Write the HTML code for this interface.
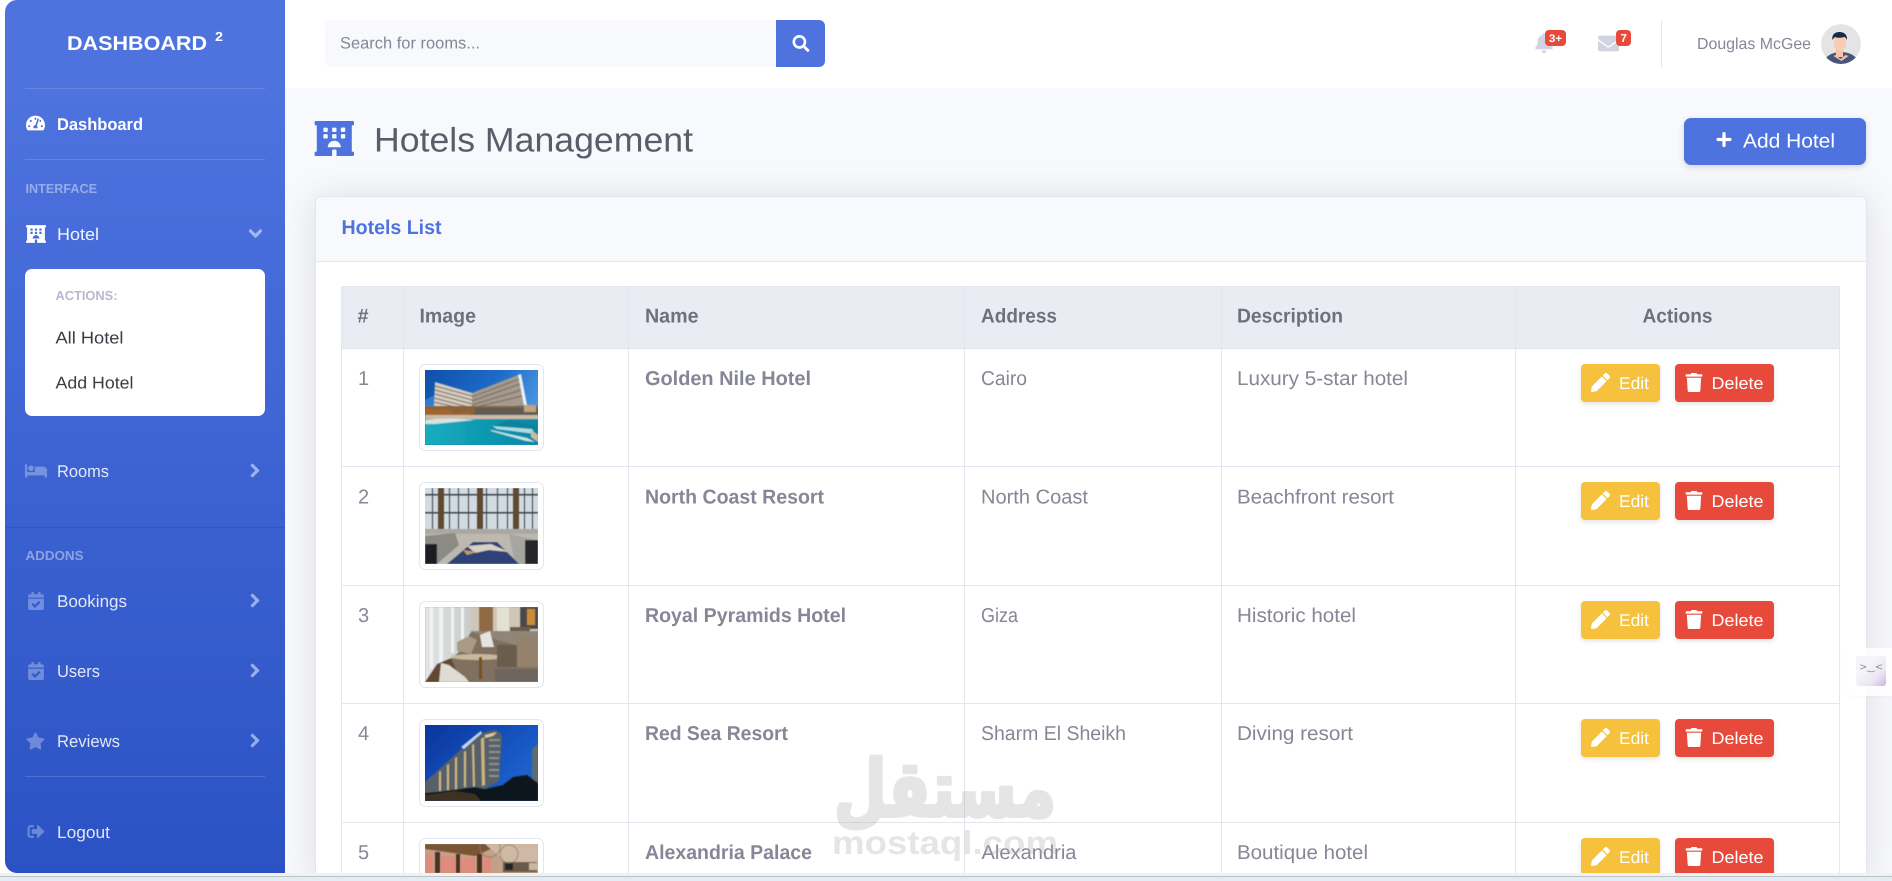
<!DOCTYPE html>
<html lang="en">
<head>
<meta charset="utf-8">
<title>Hotels Management</title>
<style>
html,body{margin:0;padding:0;width:1892px;height:881px;overflow:hidden;background:#fff;font-family:"Liberation Sans",sans-serif}
.abs{position:absolute}
#main{left:285px;top:88px;width:1607px;height:785px;background:#f8f9fc;overflow:hidden}
#card{left:30px;top:108px;width:1550px;height:682px;box-sizing:content-box;background:#fff;border:1px solid #e3e6f0;border-radius:6px;box-shadow:0 3px 35px rgba(58,59,69,.15)}
#main{contain:paint}
#card{height:680px}
#cardhead{left:0;top:0;width:1550px;height:64px;background:#f8f9fc;border-bottom:1px solid #e3e6f0;border-radius:6px 6px 0 0}
#side{left:5px;top:0;width:280px;height:873px;border-radius:12px 0 0 12px;background:linear-gradient(180deg,#4e73df 10%,#2b52c4 100%)}
#sub{left:25px;top:269px;width:240px;height:147px;background:#fff;border-radius:7px}
#addbtn{left:1684px;top:118px;width:182px;height:47px;background:#4e73df;border-radius:7px;box-shadow:0 2px 6px rgba(58,59,69,.2)}
.b{position:absolute;height:38px;border-radius:4px;box-shadow:0 2px 5px rgba(58,59,69,.15)}
.e{left:1581px;width:79px;background:#f6c23e}
.d{left:1675px;width:99px;background:#e74a3b}
#foot{left:0;top:873px;width:1892px;height:8px;background:#e1ecf4;overflow:hidden}
#foot div{height:3px;background:#f1f1f2;border-bottom:1px solid #bfc2c5}
#float{left:1846px;top:648px;width:46px;height:48px;background:rgba(255,255,255,.85);border-radius:8px 0 0 8px;box-shadow:0 1px 3px rgba(0,0,0,.03)}
#floati{left:1856px;top:656px;width:30px;height:30px;border-radius:3px;background:linear-gradient(135deg,#f4f4fa 35%,#ece6f5 70%,#d4b0e6 100%)}
svg#o{position:absolute;left:0;top:0;text-rendering:geometricPrecision}
</style>
</head>
<body>
<div class="abs" id="main">
  <div class="abs" id="card"><div class="abs" id="cardhead"></div></div>
</div>
<div class="abs" id="side"></div>
<div class="abs" id="sub"></div>
<div class="abs" id="addbtn"></div>
<div class="b e" style="top:364px"></div><div class="b d" style="top:364px"></div>
<div class="b e" style="top:482px"></div><div class="b d" style="top:482px"></div>
<div class="b e" style="top:601px"></div><div class="b d" style="top:601px"></div>
<div class="b e" style="top:719px"></div><div class="b d" style="top:719px"></div>
<div class="b e" style="top:838px"></div><div class="b d" style="top:838px"></div>

<svg id="o" width="1892" height="881" viewBox="0 0 1892 881" xmlns="http://www.w3.org/2000/svg" font-family="'Liberation Sans',sans-serif">
<defs>
<symbol id="search" viewBox="0 0 512 512"><path d="M505 442.7L405.3 343c-4.5-4.5-10.6-7-17-7H372c27.6-35.3 44-79.7 44-128C416 93.1 322.9 0 208 0S0 93.1 0 208s93.1 208 208 208c48.3 0 92.7-16.4 128-44v16.3c0 6.4 2.5 12.5 7 17l99.7 99.7c9.4 9.4 24.6 9.4 33.9 0l28.3-28.3c9.4-9.4 9.4-24.6.1-34zM208 336c-70.7 0-128-57.2-128-128 0-70.7 57.2-128 128-128 70.7 0 128 57.2 128 128 0 70.7-57.2 128-128 128z"/></symbol>
<symbol id="plus" viewBox="0 0 448 512"><path d="M416 208H272V64c0-17.67-14.33-32-32-32h-32c-17.67 0-32 14.33-32 32v144H32c-17.67 0-32 14.33-32 32v32c0 17.67 14.33 32 32 32h144v144c0 17.67 14.33 32 32 32h32c17.67 0 32-14.33 32-32V304h144c17.67 0 32-14.33 32-32v-32c0-17.67-14.33-32-32-32z"/></symbol>
<symbol id="pencil" viewBox="0 0 512 512"><path d="M497.9 142.1l-46.1 46.1c-4.7 4.7-12.3 4.7-17 0l-111-111c-4.7-4.7-4.7-12.3 0-17l46.1-46.1c18.7-18.7 49.1-18.7 67.9 0l60.1 60.1c18.8 18.7 18.8 49.1 0 67.9zM284.2 99.8L21.6 362.4.4 483.9c-2.9 16.4 11.4 30.6 27.8 27.8l121.5-21.3 262.6-262.6c4.7-4.7 4.7-12.3 0-17l-111-111c-4.8-4.7-12.4-4.7-17.1 0z"/></symbol>
<symbol id="trash" viewBox="0 0 448 512"><path d="M432 32H312l-9.4-18.7A24 24 0 0 0 281.1 0H166.8a23.72 23.72 0 0 0-21.4 13.3L136 32H16A16 16 0 0 0 0 48v32a16 16 0 0 0 16 16h416a16 16 0 0 0 16-16V48a16 16 0 0 0-16-16zM53.2 467a48 48 0 0 0 47.9 45h245.8a48 48 0 0 0 47.9-45L416 128H32z"/></symbol>
<symbol id="cr" viewBox="0 0 320 512"><path d="M285.476 272.971L91.132 467.314c-9.373 9.373-24.569 9.373-33.941 0l-22.667-22.667c-9.357-9.357-9.375-24.522-.04-33.901L188.505 256 34.484 101.255c-9.335-9.379-9.317-24.544.04-33.901l22.667-22.667c9.373-9.373 24.569-9.373 33.941 0L285.475 239.03c9.373 9.372 9.373 24.568.001 33.941z"/></symbol>
<symbol id="cd" viewBox="0 0 448 512"><path d="M207.029 381.476L12.686 187.132c-9.373-9.373-9.373-24.569 0-33.941l22.667-22.667c9.357-9.357 24.522-9.375 33.901-.04L224 284.505l154.745-154.021c9.379-9.335 24.544-9.317 33.901.04l22.667 22.667c9.373 9.373 9.373 24.569 0 33.941L240.971 381.476c-9.373 9.372-24.569 9.372-33.942 0z"/></symbol>
<symbol id="star" viewBox="0 0 576 512"><path d="M259.3 17.8L194 150.2 47.9 171.5c-26.2 3.8-36.7 36.1-17.7 54.6l105.7 103-25 145.5c-4.5 26.3 23.2 46 46.4 33.7L288 439.6l130.7 68.7c23.2 12.2 50.9-7.4 46.4-33.7l-25-145.5 105.7-103c19-18.5 8.5-50.8-17.7-54.6L382 150.2 316.7 17.8c-11.7-23.6-45.6-23.9-57.4 0z"/></symbol>
<symbol id="bell" viewBox="0 0 448 512"><path d="M224 512c35.32 0 63.97-28.65 63.97-64H160.03c0 35.35 28.65 64 63.97 64zm215.39-149.71c-19.32-20.76-55.47-51.99-55.47-154.29 0-77.7-54.48-139.9-127.94-155.16V32c0-17.67-14.32-32-31.98-32s-31.98 14.33-31.98 32v20.84C118.56 68.1 64.08 130.3 64.08 208c0 102.3-36.15 133.53-55.47 154.29-6 6.45-8.66 14.16-8.61 21.71.11 16.4 12.98 32 32.1 32h383.8c19.12 0 32-15.6 32.1-32 .05-7.55-2.61-15.27-8.61-21.71z"/></symbol>
<symbol id="env" viewBox="0 0 512 512"><path d="M502.3 190.8c3.9-3.1 9.7-.2 9.7 4.7V400c0 26.5-21.5 48-48 48H48c-26.5 0-48-21.5-48-48V195.6c0-5 5.7-7.8 9.7-4.7 22.4 17.4 52.1 39.5 154.1 113.6 21.1 15.4 56.7 47.8 92.2 47.6 35.7.3 72-32.8 92.3-47.6 102-74.1 131.6-96.3 154-113.7zM256 320c23.2.4 56.6-29.2 73.4-41.4 132.7-96.3 142.8-104.7 173.4-128.7 5.8-4.5 9.2-11.5 9.2-18.9v-19c0-26.5-21.5-48-48-48H48C21.5 64 0 85.5 0 112v19c0 7.4 3.4 14.3 9.2 18.9 30.6 23.9 40.7 32.4 173.4 128.7 16.8 12.2 50.2 41.8 73.4 41.4z"/></symbol>
<symbol id="hotel" viewBox="0 0 576 512"><path d="M560 64c8.84 0 16-7.16 16-16V16c0-8.84-7.16-16-16-16H16C7.16 0 0 7.16 0 16v32c0 8.84 7.16 16 16 16h15.98v384H16c-8.84 0-16 7.16-16 16v32c0 8.84 7.16 16 16 16h240v-80c0-8.8 7.2-16 16-16h32c8.8 0 16 7.2 16 16v80h240c8.84 0 16-7.16 16-16v-32c0-8.84-7.16-16-16-16h-16V64h16zm-304 44.8c0-6.4 6.4-12.8 12.8-12.8h38.4c6.4 0 12.8 6.4 12.8 12.8v38.4c0 6.4-6.4 12.8-12.8 12.8h-38.4c-6.4 0-12.8-6.4-12.8-12.8v-38.4zm0 96c0-6.4 6.4-12.8 12.8-12.8h38.4c6.4 0 12.8 6.4 12.8 12.8v38.4c0 6.4-6.4 12.8-12.8 12.8h-38.4c-6.4 0-12.8-6.4-12.8-12.8v-38.4zm-128-96c0-6.4 6.4-12.8 12.8-12.8h38.4c6.4 0 12.8 6.4 12.8 12.8v38.4c0 6.4-6.4 12.8-12.8 12.8h-38.4c-6.4 0-12.8-6.4-12.8-12.8v-38.4zM179.2 256h-38.4c-6.4 0-12.8-6.4-12.8-12.8v-38.4c0-6.4 6.4-12.8 12.8-12.8h38.4c6.4 0 12.8 6.4 12.8 12.8v38.4c0 6.4-6.4 12.8-12.8 12.8zM192 384c0-53.02 42.98-96 96-96s96 42.98 96 96H192zm256-140.8c0 6.4-6.4 12.8-12.8 12.8h-38.4c-6.4 0-12.8-6.4-12.8-12.8v-38.4c0-6.4 6.4-12.8 12.8-12.8h38.4c6.4 0 12.8 6.4 12.8 12.8v38.4zm0-96c0 6.4-6.4 12.8-12.8 12.8h-38.4c-6.4 0-12.8-6.4-12.8-12.8v-38.4c0-6.4 6.4-12.8 12.8-12.8h38.4c6.4 0 12.8 6.4 12.8 12.8v38.4z"/></symbol>
<symbol id="gauge" viewBox="0 0 576 512"><path d="M288 32C128.94 32 0 160.94 0 320c0 52.8 14.25 102.26 39.06 144.8 5.61 9.62 16.3 15.2 27.44 15.2h443c11.14 0 21.83-5.58 27.44-15.2C561.75 422.26 576 372.8 576 320c0-159.06-128.94-288-288-288zm0 64c14.71 0 26.58 10.13 30.32 23.65-1.11 2.26-2.64 4.23-3.45 6.67l-9.22 27.67c-5.13 3.49-10.97 6.01-17.64 6.01-17.67 0-32-14.33-32-32S270.33 96 288 96zM96 384c-17.67 0-32-14.33-32-32s14.33-32 32-32 32 14.33 32 32-14.33 32-32 32zm48-160c-17.67 0-32-14.33-32-32s14.33-32 32-32 32 14.33 32 32-14.33 32-32 32zm246.77-72.41l-61.33 184C343.13 347.33 352 364.54 352 384c0 11.72-3.38 22.55-8.88 32H232.88c-5.5-9.45-8.88-20.28-8.88-32 0-33.94 26.5-61.43 59.9-63.59l61.34-184.01c4.17-12.56 17.73-19.45 30.36-15.17 12.57 4.19 19.35 17.79 15.17 30.36zm14.66 57.2l15.52-46.55c3.47-1.29 7.13-2.23 11.05-2.23 17.67 0 32 14.33 32 32s-14.33 32-32 32c-11.38-.01-20.89-6.28-26.57-15.22zM480 384c-17.67 0-32-14.33-32-32s14.33-32 32-32 32 14.33 32 32-14.33 32-32 32z"/></symbol>
<symbol id="logout" viewBox="0 0 512 512"><path d="M497 273L329 441c-15 15-41 4.5-41-17v-96H152c-13.3 0-24-10.7-24-24v-96c0-13.3 10.7-24 24-24h136V88c0-21.4 25.9-32 41-17l168 168c9.3 9.4 9.3 24.6 0 34zM192 436v-40c0-6.6-5.4-12-12-12H96c-17.7 0-32-14.3-32-32V160c0-17.7 14.3-32 32-32h84c6.6 0 12-5.4 12-12V76c0-6.6-5.4-12-12-12H96c-53 0-96 43-96 96v192c0 53 43 96 96 96h84c6.6 0 12-5.4 12-12z"/></symbol>
<symbol id="cal" viewBox="0 0 448 512"><path d="M436 160H12c-6.627 0-12-5.373-12-12v-36c0-26.51 21.49-48 48-48h48V12c0-6.627 5.373-12 12-12h40c6.627 0 12 5.373 12 12v52h128V12c0-6.627 5.373-12 12-12h40c6.627 0 12 5.373 12 12v52h48c26.51 0 48 21.49 48 48v36c0 6.627-5.373 12-12 12zM12 192h424c6.627 0 12 5.373 12 12v260c0 26.51-21.49 48-48 48H48c-26.51 0-48-21.49-48-48V204c0-6.627 5.373-12 12-12zm333.296 95.947l-28.169-28.398c-4.667-4.705-12.265-4.736-16.97-.068L194.12 364.665l-45.98-46.352c-4.667-4.705-12.266-4.736-16.971-.068l-28.397 28.17c-4.705 4.667-4.736 12.265-.068 16.97l82.601 83.269c4.667 4.705 12.265 4.736 16.97.068l142.953-141.805c4.705-4.667 4.736-12.265.068-16.97z"/></symbol>
<symbol id="bed" viewBox="0 0 640 512"><path d="M176 256c44.11 0 80-35.89 80-80s-35.89-80-80-80-80 35.89-80 80 35.89 80 80 80zm352-128H304c-8.84 0-16 7.16-16 16v144H64V80c0-8.84-7.16-16-16-16H16C7.16 64 0 71.16 0 80v352c0 8.84 7.16 16 16 16h32c8.84 0 16-7.16 16-16v-48h512v48c0 8.84 7.16 16 16 16h32c8.84 0 16-7.16 16-16V240c0-61.86-50.14-112-112-112z"/></symbol>
<linearGradient id="sky1" x1="0" y1="0" x2="1" y2=".4"><stop offset="0" stop-color="#0f4fa8"/><stop offset=".6" stop-color="#1e6cc8"/><stop offset="1" stop-color="#4a94e0"/></linearGradient>
<linearGradient id="sky4" x1="0" y1="0" x2="1" y2=".7"><stop offset="0" stop-color="#0a349c"/><stop offset="1" stop-color="#1e66d4"/></linearGradient>
<linearGradient id="pool" x1="0" y1="0" x2="1" y2="0"><stop offset="0" stop-color="#16adbf"/><stop offset="1" stop-color="#0a86a4"/></linearGradient>
<linearGradient id="cur" x1="0" y1="0" x2="1" y2="0"><stop offset="0" stop-color="#e2e5e5"/><stop offset="1" stop-color="#c7cbcb"/></linearGradient>
<filter id="bl" x="-5%" y="-5%" width="110%" height="110%"><feGaussianBlur stdDeviation=".55"/></filter>
<clipPath id="av"><circle cx="1841" cy="44" r="20"/></clipPath>
</defs>

<!-- SIDEBAR -->
<g fill="#fff">
<text x="67" y="50" font-size="20" font-weight="700" textLength="140" lengthAdjust="spacingAndGlyphs">DASHBOARD</text>
<text x="215" y="41" font-size="13" font-weight="700" textLength="8" lengthAdjust="spacingAndGlyphs">2</text>
<rect x="25" y="88" width="240" height="1" fill-opacity=".15"/>
<use href="#gauge" x="26" y="113" width="19" height="20"/>
<text x="57" y="130" font-size="17" font-weight="700" textLength="86" lengthAdjust="spacingAndGlyphs">Dashboard</text>
<rect x="25" y="159" width="240" height="1" fill-opacity=".15"/>
<text x="25.5" y="193" font-size="13" font-weight="700" fill-opacity=".42" textLength="71.5" lengthAdjust="spacingAndGlyphs">INTERFACE</text>
<use href="#hotel" x="26" y="225" width="20" height="18"/>
<text x="57" y="240" font-size="17" fill-opacity=".92" textLength="42" lengthAdjust="spacingAndGlyphs">Hotel</text>
<use href="#cd" x="249" y="226" width="13" height="15" opacity=".5" stroke="#fff" stroke-width="30"/>
<use href="#bed" x="25" y="462" width="22" height="18" fill-opacity=".3"/>
<text x="57" y="477" font-size="17" fill-opacity=".85" textLength="52" lengthAdjust="spacingAndGlyphs">Rooms</text>
<use href="#cr" x="250" y="463" width="10" height="15" opacity=".5" stroke="#fff" stroke-width="30"/>
<rect x="5" y="527" width="280" height="1" fill="#2f56c8"/>
<text x="25.5" y="560" font-size="13" font-weight="700" fill-opacity=".42" textLength="58" lengthAdjust="spacingAndGlyphs">ADDONS</text>
<use href="#cal" x="28" y="592" width="16" height="18" fill-opacity=".3"/>
<text x="57" y="607" font-size="17" fill-opacity=".85" textLength="70" lengthAdjust="spacingAndGlyphs">Bookings</text>
<use href="#cr" x="250" y="593" width="10" height="15" opacity=".5" stroke="#fff" stroke-width="30"/>
<use href="#cal" x="28" y="662" width="16" height="18" fill-opacity=".3"/>
<text x="57" y="677" font-size="17" fill-opacity=".85" textLength="43" lengthAdjust="spacingAndGlyphs">Users</text>
<use href="#cr" x="250" y="663" width="10" height="15" opacity=".5" stroke="#fff" stroke-width="30"/>
<use href="#star" x="26" y="732" width="19" height="18" fill-opacity=".3"/>
<text x="57" y="747" font-size="17" fill-opacity=".85" textLength="63" lengthAdjust="spacingAndGlyphs">Reviews</text>
<use href="#cr" x="250" y="733" width="10" height="15" opacity=".5" stroke="#fff" stroke-width="30"/>
<rect x="25" y="776" width="240" height="1" fill-opacity=".15"/>
<use href="#logout" x="27" y="823" width="18" height="17" fill-opacity=".3"/>
<text x="57" y="838" font-size="17" fill-opacity=".85" textLength="53" lengthAdjust="spacingAndGlyphs">Logout</text>
</g>
<text x="55.5" y="300" font-size="13" font-weight="700" fill="#b7b9cc" textLength="62" lengthAdjust="spacingAndGlyphs">ACTIONS:</text>
<text x="55.5" y="343.5" font-size="17" fill="#3a3b45" textLength="68" lengthAdjust="spacingAndGlyphs">All Hotel</text>
<text x="55.5" y="388.5" font-size="17" fill="#3a3b45" textLength="78" lengthAdjust="spacingAndGlyphs">Add Hotel</text>

<!-- TOPBAR -->
<path d="M331 20H776v47H331a6 6 0 0 1-6-6V26a6 6 0 0 1 6-6z" fill="#f8f9fc"/>
<path d="M776 20H819a6 6 0 0 1 6 6v35a6 6 0 0 1-6 6H776z" fill="#4e73df"/>
<use href="#search" x="792" y="35" width="18" height="17" fill="#fff"/>
<text x="340" y="48.500" font-size="16.5" fill="#858796" textLength="140" lengthAdjust="spacingAndGlyphs">Search for rooms...</text>
<use href="#bell" x="1535" y="33" width="18" height="20" fill="#d1d3e2"/>
<rect x="1545" y="30" width="21" height="16" rx="4" fill="#e74a3b"/>
<text x="1549" y="42" font-size="11" font-weight="700" fill="#fff" textLength="13" lengthAdjust="spacingAndGlyphs">3+</text>
<use href="#env" x="1598" y="33" width="21" height="21" fill="#d1d3e2"/>
<rect x="1616" y="30" width="15" height="16" rx="4" fill="#e74a3b"/>
<text x="1620.5" y="42" font-size="11.5" font-weight="700" fill="#fff">7</text>
<rect x="1661" y="20" width="1" height="48" fill="#e3e6f0"/>
<text x="1697" y="49" font-size="16" fill="#858796" textLength="114" lengthAdjust="spacingAndGlyphs">Douglas McGee</text>
<g clip-path="url(#av)">
<circle cx="1841" cy="44" r="20" fill="#e4e4e4"/>
<ellipse cx="1841" cy="63" rx="17" ry="11" fill="#46577a"/>
<rect x="1836" y="48" width="7" height="9" fill="#f3c3aa"/>
<path d="M1835.5 55l5 4 5-4 3 1-7 5-8-5z" fill="#f3c3aa"/>
<ellipse cx="1840" cy="43" rx="6" ry="8" fill="#f7cdb6"/>
<path d="M1832.500 40c-1-6 3-8 7-8s8 2 7.500 8c-1-2-2-3-3-3-3 1-7 1-9 0-1 1-2 2-2.500 3z" fill="#1d2a44"/>
</g>

<!-- HEADING -->
<use href="#hotel" x="314.500" y="121" width="39.600" height="35" fill="#4e73df" preserveAspectRatio="none"/>
<text x="374" y="151.500" font-size="34" fill="#5a5c69" textLength="319" lengthAdjust="spacingAndGlyphs">Hotels Management</text>
<use href="#plus" x="1715" y="131" width="18" height="17" fill="#fff" preserveAspectRatio="none"/>
<text x="1743" y="147.500" font-size="20" fill="#fff" textLength="92" lengthAdjust="spacingAndGlyphs">Add Hotel</text>
<text x="341.500" y="234" font-size="20" font-weight="700" fill="#4e73df" textLength="100" lengthAdjust="spacingAndGlyphs">Hotels List</text>

<!-- TABLE GRID -->
<rect x="341" y="286" width="1499" height="63" fill="#eaecf4"/>
<g fill="#e3e6f0">
<rect x="341" y="286" width="1499" height="1"/>
<rect x="341" y="348" width="1499" height="1"/>
<rect x="341" y="466" width="1499" height="1"/>
<rect x="341" y="585" width="1499" height="1"/>
<rect x="341" y="703" width="1499" height="1"/>
<rect x="341" y="822" width="1499" height="1"/>
<rect x="341" y="286" width="1" height="587"/>
<rect x="403" y="286" width="1" height="587"/>
<rect x="628" y="286" width="1" height="587"/>
<rect x="964" y="286" width="1" height="587"/>
<rect x="1221" y="286" width="1" height="587"/>
<rect x="1515" y="286" width="1" height="587"/>
<rect x="1839" y="286" width="1" height="587"/>
</g>
<g font-size="20" font-weight="700" fill="#6e707e">
<text x="357.500" y="322.500" textLength="11" lengthAdjust="spacingAndGlyphs">#</text>
<text x="419.500" y="322.500" textLength="56.500" lengthAdjust="spacingAndGlyphs">Image</text>
<text x="645" y="322.500" textLength="53.500" lengthAdjust="spacingAndGlyphs">Name</text>
<text x="981" y="322.500" textLength="76" lengthAdjust="spacingAndGlyphs">Address</text>
<text x="1237" y="322.500" textLength="106" lengthAdjust="spacingAndGlyphs">Description</text>
<text x="1642.500" y="322.500" textLength="70" lengthAdjust="spacingAndGlyphs">Actions</text>
</g>
<g font-size="20" fill="#858796">
<text x="358" y="385">1</text><text x="358" y="503.500">2</text><text x="358" y="622">3</text><text x="358" y="740">4</text><text x="358" y="859">5</text>
<g font-weight="700">
<text x="645" y="385" textLength="166" lengthAdjust="spacingAndGlyphs">Golden Nile Hotel</text>
<text x="645" y="503.500" textLength="179" lengthAdjust="spacingAndGlyphs">North Coast Resort</text>
<text x="645" y="622" textLength="201" lengthAdjust="spacingAndGlyphs">Royal Pyramids Hotel</text>
<text x="645" y="740" textLength="143" lengthAdjust="spacingAndGlyphs">Red Sea Resort</text>
<text x="645" y="859" textLength="167" lengthAdjust="spacingAndGlyphs">Alexandria Palace</text>
</g>
<text x="981" y="385" textLength="46" lengthAdjust="spacingAndGlyphs">Cairo</text>
<text x="981" y="503.500" textLength="107" lengthAdjust="spacingAndGlyphs">North Coast</text>
<text x="981" y="622" textLength="37" lengthAdjust="spacingAndGlyphs">Giza</text>
<text x="981" y="740" textLength="145" lengthAdjust="spacingAndGlyphs">Sharm El Sheikh</text>
<text x="981.500" y="859" textLength="95" lengthAdjust="spacingAndGlyphs">Alexandria</text>
<text x="1237" y="385" textLength="171" lengthAdjust="spacingAndGlyphs">Luxury 5-star hotel</text>
<text x="1237" y="503.500" textLength="157" lengthAdjust="spacingAndGlyphs">Beachfront resort</text>
<text x="1237" y="622" textLength="119" lengthAdjust="spacingAndGlyphs">Historic hotel</text>
<text x="1237" y="740" textLength="116" lengthAdjust="spacingAndGlyphs">Diving resort</text>
<text x="1237" y="859" textLength="131" lengthAdjust="spacingAndGlyphs">Boutique hotel</text>
</g>

<!-- THUMB FRAMES -->
<g fill="#fff" stroke="#e3e6f0">
<rect x="419.500" y="364.500" width="124" height="86" rx="6"/>
<rect x="419.500" y="482.500" width="124" height="87" rx="6"/>
<rect x="419.500" y="601.500" width="124" height="86" rx="6"/>
<rect x="419.500" y="719.500" width="124" height="87" rx="6"/>
<rect x="419.500" y="838.500" width="124" height="40" rx="6"/>
</g>

<!-- THUMB 1 -->
<svg x="425" y="370" width="113" height="75" viewBox="0 0 113 75">
<rect width="113" height="75" fill="url(#sky1)"/>
<g filter="url(#bl)">
<path d="M0 30l12-6 5 14-17 8z" fill="#2f7fd0"/>
<path d="M10 12l37 11v17L9 36z" fill="#d8cdbf"/>
<path d="M47 23l46-18 6 30-52 5z" fill="#a69a8d"/>
<path d="M93 5l3-1 6 31-3 .5z" fill="#eef1f4"/>
<g stroke="#6d655e" stroke-width="1.200" opacity=".75" fill="none">
<path d="M10 16l37 10M10 20l37 10M10 24l37 10M9 28l38 10M9 32l38 9"/>
<path d="M47 27l47-18M47 31l48-17M47 35l49-15M47 38l50-12"/>
</g>
<rect x="0" y="36" width="113" height="13" fill="#8a6238"/>
<path d="M0 37l8 3 14-2 8 6 14-3V50H0z" fill="#a0662f"/>
<rect x="50" y="38" width="63" height="10" fill="#5d5c55"/>
<path d="M99 35h12v7H99z" fill="#c4a27e"/>
<rect x="0" y="45" width="113" height="5" fill="#cdbba5"/>
<rect x="0" y="49" width="113" height="26" fill="url(#pool)"/>
<path d="M65 57l20-7 28 7v3l-18-2 18 10v-3z" fill="#0b829b"/>
<path d="M67 56l40 3 3 5-38-5z" fill="#aadde4"/>
<path d="M66 60l36 8 8 4-9-1-35-10z" fill="#c5e4e6"/>
<path d="M0 50c15-2 30-2 50 0l-40 4H0z" fill="#d6e3e0"/>
<path d="M106 60l7 5v7l-7-5z" fill="#c9b9a8"/>
</g>
</svg>

<!-- THUMB 2 -->
<svg x="425" y="488" width="113" height="76" viewBox="0 0 113 76">
<rect width="113" height="76" fill="#d2dbe2"/>
<g filter="url(#bl)">
<g fill="#3b4048">
<rect x="7" y="0" width="1" height="46"/><rect x="24" y="0" width="1" height="46"/><rect x="33" y="0" width="1" height="46"/><rect x="43" y="0" width="1" height="46"/>
<rect x="61" y="0" width="1" height="46"/><rect x="72" y="0" width="1" height="46"/><rect x="82" y="0" width="1" height="46"/>
<rect x="99" y="0" width="1" height="46"/><rect x="107" y="0" width="1" height="46"/>
<rect x="0" y="6" width="113" height="1.500"/><rect x="0" y="24" width="113" height="1.500"/>
</g>
<g fill="#5f4a30"><rect x="13" y="0" width="6" height="45"/><rect x="52" y="0" width="6" height="45"/><rect x="88" y="0" width="6" height="45"/></g>
<rect x="0" y="41" width="113" height="6" fill="#a9a8a2"/>
<rect x="0" y="46" width="113" height="30" fill="#bdb9b0"/>
<path d="M0 48l30-3 4 12-22 19H0z" fill="#8b8a85"/>
<path d="M0 56h12v20H0z" fill="#1e1f22"/>
<path d="M84 46l28 6v24H90z" fill="#a7a5a0"/>
<path d="M100 52h13v24h-13z" fill="#26272b"/>
<path d="M22 76l26-22h24l22 22z" fill="#2e4277"/>
<path d="M42 58l24-2 18 8-20-2-14 3z" fill="#d8d0c3"/>
<path d="M38 62l14 2-10 3z" fill="#c39a60"/>
</g>
</svg>

<!-- THUMB 3 -->
<svg x="425" y="607" width="113" height="75" viewBox="0 0 113 75">
<rect width="113" height="75" fill="#a89a88"/>
<g filter="url(#bl)">
<rect x="44" y="0" width="69" height="30" fill="#cfc6b8"/>
<rect x="54" y="0" width="14" height="24" fill="#8f6a45"/>
<rect x="72" y="0" width="12" height="28" fill="#e3e0d4"/>
<rect x="95" y="0" width="18" height="22" fill="#4a4a4c"/>
<rect x="102" y="2" width="8" height="16" fill="#c98c3a"/>
<rect x="85" y="20" width="20" height="10" fill="#6c5b47"/>
<rect x="45" y="24" width="68" height="20" fill="#8f8578"/>
<rect x="0" y="0" width="46" height="75" fill="url(#cur)"/>
<g fill="#f2f3f3"><rect x="5" y="0" width="3" height="62"/><rect x="14" y="0" width="4" height="56"/><rect x="26" y="0" width="3" height="46"/><rect x="36" y="0" width="3" height="36"/></g>
<path d="M46 25l-12 20-34 30h113V45z" fill="#7f705f"/>
<path d="M0 75l12-18 14-6 10 24z" fill="#5f4930"/>
<path d="M16 56l8 2 16 12 4 5H14z" fill="#dfdcd4"/>
<ellipse cx="52" cy="50" rx="26" ry="3" fill="#c9b79e"/>
<rect x="54" y="50" width="3" height="22" fill="#75501f"/>
<path d="M32 35l12-6 8 4-6 14-14-3z" fill="#a99a86"/>
<path d="M55 28l10-4 4 16h-12z" fill="#e4e3dd"/>
<path d="M72 38h30v22H72z" fill="#6a5d4d"/>
<path d="M92 30h21v30H92z" fill="#94826d"/>
<path d="M70 62h43v13H70z" fill="#6c655c"/>
</g>
</svg>

<!-- THUMB 4 -->
<svg x="425" y="725" width="113" height="76" viewBox="0 0 113 76">
<rect width="113" height="76" fill="url(#sky4)"/>
<g filter="url(#bl)">
<path d="M107 24c2-2 5-4 6-5v40h-6z" fill="#5c6c70"/>
<path d="M0 57L52 10l16-5c5 1 9 3 9 7l-3 44-16 9-12 4H0z" fill="#56616a"/>
<g fill="#cdb57c">
<path d="M56 14l3-2 1 48-3 1zM47 20l2-1 1 42-2 1zM39 27l2-1v36h-2zM30 33l2-1v32l-2 .5zM22 40l2-1v26h-2zM14 47l2-1v20h-2z"/>
<path d="M60 10l12-3-4 4-8 2z" fill="#e0cc95"/>
</g>
<g fill="#8c8f85"><rect x="64" y="14" width="11" height="2"/><rect x="64" y="20" width="11" height="2"/><rect x="64" y="26" width="11" height="2"/><rect x="64" y="32" width="10" height="2"/><rect x="64" y="38" width="10" height="2"/><rect x="64" y="44" width="10" height="2"/><rect x="64" y="50" width="10" height="2"/></g>
<path d="M36 22L52 9l4-3 1 2-18 16z" fill="#bfd4f0"/>
<path d="M0 76V68l20-2 30-4 10 2 18-4 10-8 14-2 11 8v18z" fill="#10151c"/>
<path d="M0 70l30-4 20 3 6 7H0z" fill="#3d3322"/>
</g>
</svg>

<!-- THUMB 5 -->
<svg x="425" y="844" width="113" height="29" viewBox="0 0 113 29">
<rect width="113" height="29" fill="#c2a18a"/>
<g filter="url(#bl)">
<path d="M0 0h113v5L70 3 50 12 0 5z" fill="#7a5436"/>
<path d="M60 0h53v26H90z" fill="#cfb9a5"/>
<path d="M0 10h8v19H0zM16 12h14v17H16zM36 14h14v15H36zM58 12h8v17h-8z" fill="#de8d7c"/>
<path d="M10 8h5v21h-5zM31 10h4v19h-4zM52 10h5v19h-5z" fill="#4d3320"/>
<rect x="78" y="18" width="34" height="10" fill="#6a5a48"/>
<rect x="80" y="19" width="8" height="7" fill="#25232a"/>
<rect x="104" y="19" width="8" height="7" fill="#c9b79f"/>
<g fill="none" stroke="#8d7a68" stroke-width=".8"><circle cx="65" cy="3" r="10"/><circle cx="84" cy="10" r="9"/></g>
</g>
</svg>

<!-- BUTTON CONTENT -->
<g fill="#fff">
<use href="#pencil" x="1591" y="373" width="19" height="19"/><text x="1619" y="389" font-size="17" textLength="30" lengthAdjust="spacingAndGlyphs">Edit</text>
<use href="#trash" x="1685.500" y="373" width="17" height="19"/><text x="1711.500" y="389" font-size="17" textLength="52" lengthAdjust="spacingAndGlyphs">Delete</text>
<use href="#pencil" x="1591" y="491" width="19" height="19"/><text x="1619" y="507" font-size="17" textLength="30" lengthAdjust="spacingAndGlyphs">Edit</text>
<use href="#trash" x="1685.500" y="491" width="17" height="19"/><text x="1711.500" y="507" font-size="17" textLength="52" lengthAdjust="spacingAndGlyphs">Delete</text>
<use href="#pencil" x="1591" y="610" width="19" height="19"/><text x="1619" y="626" font-size="17" textLength="30" lengthAdjust="spacingAndGlyphs">Edit</text>
<use href="#trash" x="1685.500" y="610" width="17" height="19"/><text x="1711.500" y="626" font-size="17" textLength="52" lengthAdjust="spacingAndGlyphs">Delete</text>
<use href="#pencil" x="1591" y="728" width="19" height="19"/><text x="1619" y="744" font-size="17" textLength="30" lengthAdjust="spacingAndGlyphs">Edit</text>
<use href="#trash" x="1685.500" y="728" width="17" height="19"/><text x="1711.500" y="744" font-size="17" textLength="52" lengthAdjust="spacingAndGlyphs">Delete</text>
<use href="#pencil" x="1591" y="847" width="19" height="19"/><text x="1619" y="863" font-size="17" textLength="30" lengthAdjust="spacingAndGlyphs">Edit</text>
<use href="#trash" x="1685.500" y="847" width="17" height="19"/><text x="1711.500" y="863" font-size="17" textLength="52" lengthAdjust="spacingAndGlyphs">Delete</text>
</g>

<!-- WATERMARK -->
<g fill="#aaaaaa" opacity=".3">
<text x="834" y="816" font-family="'DejaVu Sans',sans-serif" font-size="78" font-weight="700" textLength="222" lengthAdjust="spacingAndGlyphs" stroke="#aaaaaa" stroke-width="4" stroke-linejoin="round">مستقل</text>
<text x="832" y="854" font-size="33" font-weight="700" textLength="226" lengthAdjust="spacingAndGlyphs">mostaql.com</text>
</g>
</svg>

<div class="abs" id="float"></div>
<div class="abs" id="floati"></div>
<svg class="abs" style="left:1856px;top:656px" width="30" height="30" viewBox="0 0 30 30"><text x="15" y="14" text-anchor="middle" font-family="'DejaVu Sans',sans-serif" font-size="9.500" fill="#8b8b95">&gt;‿&lt;</text></svg>
<div class="abs" id="foot"><div></div></div>
</body>
</html>
